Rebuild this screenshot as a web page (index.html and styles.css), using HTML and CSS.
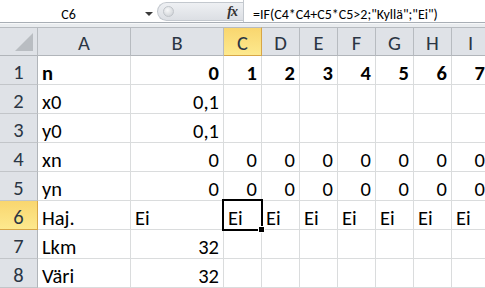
FILE: index.html
```html
<!DOCTYPE html>
<html lang="fi">
<head>
  <meta charset="UTF-8">
  <title>Laskentataulukko</title>
  <link rel="stylesheet" href="styles.css">
</head>
<body>
  <div id="formulaBar">
    <div class="name-box">
      <span class="name-text">C6</span>
      <span class="drop-arrow"></span>
    </div>
    <div class="fx-area">
      <span class="knob"></span>
      <span class="fx">fx</span>
    </div>
    <div class="formula">=IF(C4*C4+C5*C5&gt;2;"Kyllä";"Ei")</div>
  </div>
  <div class="band"></div>

  <div id="sheet">
    <!-- column headers -->
    <div class="hdr corner">
      <svg width="19" height="19" viewBox="0 0 19 19"><polygon points="18,0 18,18 0,18" fill="#b9bdc2"/></svg>
    </div>
    <div class="hdr">A</div>
    <div class="hdr">B</div>
    <div class="hdr active">C</div>
    <div class="hdr">D</div>
    <div class="hdr">E</div>
    <div class="hdr">F</div>
    <div class="hdr">G</div>
    <div class="hdr">H</div>
    <div class="hdr">I</div>

    <!-- row 1 -->
    <div class="rh">1</div>
    <div class="c b">n</div>
    <div class="c r b">0</div>
    <div class="c r b">1</div>
    <div class="c r b">2</div>
    <div class="c r b">3</div>
    <div class="c r b">4</div>
    <div class="c r b">5</div>
    <div class="c r b">6</div>
    <div class="c r b">7</div>

    <!-- row 2 -->
    <div class="rh">2</div>
    <div class="c">x0</div>
    <div class="c r">0,1</div>
    <div class="c"></div><div class="c"></div><div class="c"></div><div class="c"></div>
    <div class="c"></div><div class="c"></div><div class="c"></div>

    <!-- row 3 -->
    <div class="rh">3</div>
    <div class="c">y0</div>
    <div class="c r">0,1</div>
    <div class="c"></div><div class="c"></div><div class="c"></div><div class="c"></div>
    <div class="c"></div><div class="c"></div><div class="c"></div>

    <!-- row 4 -->
    <div class="rh">4</div>
    <div class="c">xn</div>
    <div class="c r">0</div>
    <div class="c r">0</div><div class="c r">0</div><div class="c r">0</div><div class="c r">0</div>
    <div class="c r">0</div><div class="c r">0</div><div class="c r">0</div>

    <!-- row 5 -->
    <div class="rh">5</div>
    <div class="c">yn</div>
    <div class="c r">0</div>
    <div class="c r">0</div><div class="c r">0</div><div class="c r">0</div><div class="c r">0</div>
    <div class="c r">0</div><div class="c r">0</div><div class="c r">0</div>

    <!-- row 6 -->
    <div class="rh active">6</div>
    <div class="c">Haj.</div>
    <div class="c">Ei</div>
    <div class="c selected">Ei</div>
    <div class="c">Ei</div><div class="c">Ei</div><div class="c">Ei</div>
    <div class="c">Ei</div><div class="c">Ei</div><div class="c">Ei</div>

    <!-- row 7 -->
    <div class="rh">7</div>
    <div class="c">Lkm</div>
    <div class="c r">32</div>
    <div class="c"></div><div class="c"></div><div class="c"></div><div class="c"></div>
    <div class="c"></div><div class="c"></div><div class="c"></div>

    <!-- row 8 -->
    <div class="rh">8</div>
    <div class="c">Väri</div>
    <div class="c r">32</div>
    <div class="c"></div><div class="c"></div><div class="c"></div><div class="c"></div>
    <div class="c"></div><div class="c"></div><div class="c"></div>
  </div>
</body>
</html>
```

FILE: styles.css
```css
body {
  margin: 0;
  width: 485px;
  height: 288px;
  overflow: hidden;
  background: #fff;
  font-family: Carlito, Lato, 'Liberation Sans', sans-serif;
  font-size: 14px;
  color: #000;
}

#formulaBar {
  display: flex;
  height: 23px;
  box-sizing: border-box;
  border-bottom: 1px solid #a8aeb5;
  background: #fff;
}

.name-box {
  width: 157px;
  display: flex;
  align-items: flex-start;
  flex-shrink: 0;
}

.name-text {
  width: 137px;
  text-align: center;
  line-height: 14px;
  padding-top: 8px;
}

.drop-arrow {
  width: 0;
  height: 0;
  margin: 12px 0 0 8px;
  border-left: 4px solid transparent;
  border-right: 4px solid transparent;
  border-top: 4px solid #3b3b3b;
}

.fx-area {
  width: 86px;
  height: 19px;
  margin-top: 2px;
  box-sizing: border-box;
  border: 1px solid #c3c8ce;
  border-right: none;
  border-radius: 10px 0 0 10px;
  background: linear-gradient(#eef0f3, #dcdfe4);
  display: flex;
  align-items: center;
  justify-content: space-between;
  padding: 0 6px 0 5px;
  flex-shrink: 0;
}

.knob {
  width: 9px;
  height: 9px;
  border-radius: 50%;
  background: radial-gradient(circle at 40% 35%, #f7f8f9, #c9cdd2);
  border: 1px solid #c0c4c9;
}

.fx {
  font-family: 'Liberation Serif', serif;
  font-style: italic;
  font-weight: bold;
  font-size: 14px;
  color: #333;
  letter-spacing: -1px;
}

.formula {
  flex: 1;
  border-left: 1px solid #c3c8ce;
  padding: 8px 0 0 9px;
  line-height: 14px;
  white-space: nowrap;
}

.band {
  height: 4px;
  background: #e9ecef;
  border-top: 1px solid #f6f7f8;
  box-sizing: border-box;
}

#sheet {
  display: grid;
  grid-template-columns: 38px 93px 93px repeat(7, 38px);
  grid-auto-rows: 29px;
  font-size: 20.5px;
}

#sheet > div {
  box-sizing: border-box;
  border-right: 1px solid #dadcdd;
  border-bottom: 1px solid #dadcdd;
  white-space: nowrap;
  overflow: hidden;
}

#sheet > .hdr {
  background: #dfe2e7;
  border-top: 1px solid #b7bbc0;
  border-right-color: #b7bbc0;
  border-bottom-color: #b1b5ba;
  color: #2b3644;
  text-align: center;
  line-height: 22px;
  padding-top: 4px;
}

#sheet > .corner {
  display: flex;
  justify-content: flex-end;
  align-items: flex-end;
  padding: 0 3px 3px 0;
}

#sheet > .rh {
  background: #dfe2e7;
  border-right-color: #b1b5ba;
  border-bottom-color: #c2c5c9;
  color: #2b3644;
  text-align: center;
  line-height: 22px;
  padding-top: 5px;
}

#sheet > .active {
  background: linear-gradient(#f9d66f, #fde98e);
  border-right-color: #d7a647;
  border-bottom-color: #d7a647;
}

.c {
  padding: 6px 4px 0;
  line-height: 22px;
}

.c.r {
  text-align: right;
}

.c.b {
  font-weight: bold;
}

#sheet > .selected {
  position: relative;
  overflow: visible;
}

.selected::before {
  content: '';
  position: absolute;
  left: -2px;
  top: -2px;
  width: 41px;
  height: 32px;
  box-sizing: border-box;
  border: 2px solid #000;
}

.selected::after {
  content: '';
  position: absolute;
  left: 35px;
  top: 26px;
  width: 5px;
  height: 5px;
  background: #000;
  outline: 1px solid #fff;
  z-index: 2;
}
```
